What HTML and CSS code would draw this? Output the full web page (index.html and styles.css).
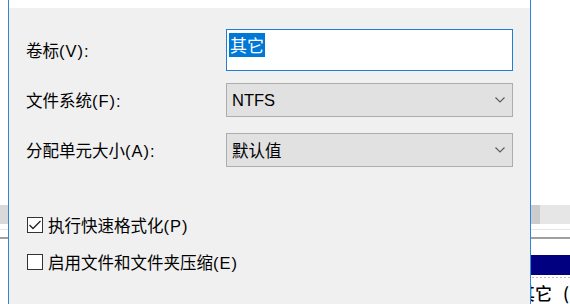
FILE: index.html
```html
<!DOCTYPE html>
<html>
<head>
<meta charset="utf-8">
<link rel="stylesheet" href="styles.css">
</head>
<body>
<div class="screen">
  <div class="desk">
    <div class="desk-spacer"></div>
    <div class="greybar"><div class="gb-main"></div><div class="gb-patch"></div><div class="gb-rest"></div></div>
    <div class="lightline"></div>
    <div class="darkline"></div>
    <div class="navyrow"></div>
    <div class="dotline"></div>
    <div class="drive-row"><span>其它</span><span>(E:)</span></div>
  </div>

  <div class="dialog">
    <div class="dlg-top"></div>
    <div class="dlg-body">
      <div class="row row-text">
        <div class="label">卷标<span class="acc">(V):</span></div>
        <div class="textbox"><span class="sel">其它</span></div>
      </div>
      <div class="row row-combo1">
        <div class="label">文件系统<span class="acc">(F):</span></div>
        <div class="combo"><span class="combo-val">NTFS</span>
          <svg class="chev" width="10" height="6" viewBox="0 0 10 6"><path d="M0.5 0.5 L5 5 L9.5 0.5" fill="none" stroke="#5a5a5a" stroke-width="1.1"/></svg>
        </div>
      </div>
      <div class="row row-combo2">
        <div class="label">分配单元大小<span class="acc">(A):</span></div>
        <div class="combo"><span class="combo-val">默认值</span>
          <svg class="chev" width="10" height="6" viewBox="0 0 10 6"><path d="M0.5 0.5 L5 5 L9.5 0.5" fill="none" stroke="#5a5a5a" stroke-width="1.1"/></svg>
        </div>
      </div>
      <div class="check check1">
        <span class="box"><svg width="14" height="14" viewBox="0 0 14 14"><path d="M1.5 7 L5 10.5 L12.5 3" fill="none" stroke="#222" stroke-width="1.3"/></svg></span>
        <span class="check-label">执行快速格式化<span class="acc">(P)</span></span>
      </div>
      <div class="check check2">
        <span class="box"></span>
        <span class="check-label">启用文件和文件夹压缩<span class="acc">(E)</span></span>
      </div>
    </div>
  </div>
</div>
</body>
</html>
```

FILE: styles.css
```css
html, body {
  margin: 0;
  padding: 0;
}
body {
  width: 570px;
  height: 304px;
  overflow: hidden;
  background: #ffffff;
  font-family: "Liberation Sans", "Noto Sans CJK SC", sans-serif;
  font-size: 16.5px;
  color: #000;
}
.screen {
  position: relative;
  width: 570px;
  height: 304px;
  overflow: hidden;
}
.desk {
  display: flex;
  flex-direction: column;
  width: 570px;
  height: 304px;
}
.desk-spacer { height: 205px; flex: none; }
.greybar {
  height: 19px;
  flex: none;
  display: flex;
}
.gb-main { width: 531px; background: #d9d9d9; }
.gb-patch { width: 9px; background: #cccccc; }
.gb-rest { flex: 1; background: #e6e6e6; }
.lightline {
  height: 1px;
  margin-top: 5px;
  background: #e6e6e6;
  flex: none;
}
.darkline {
  height: 2px;
  margin-top: 7px;
  background: #a0a0a0;
  flex: none;
}
.navyrow {
  height: 20px;
  margin-top: 16px;
  margin-left: 300px;
  background: #000080;
  flex: none;
}
.dotline {
  height: 1px;
  margin-top: 2px;
  margin-left: 300px;
  background: repeating-linear-gradient(90deg, #bdbdbd 0 2px, #ffffff 2px 4px);
  flex: none;
}
.drive-row {
  display: flex;
  gap: 11px;
  margin-top: 5px;
  margin-left: 518px;
  height: 20px;
  line-height: 20px;
  font-family: "Noto Sans CJK SC", sans-serif;
  font-size: 17px;
  font-weight: 500;
  white-space: nowrap;
}

.dialog {
  position: absolute;
  left: 8px;
  top: 0;
  width: 521px;
  height: 304px;
  border-left: 1px solid #2f86d6;
  border-right: 1px solid #2f86d6;
  display: flex;
  flex-direction: column;
}
.dlg-top {
  height: 8px;
  background: #ffffff;
  flex: none;
}
.dlg-body {
  flex: 1;
  background: #f0f0f0;
  padding: 21px 17px 0 17px;
  display: flex;
  flex-direction: column;
}
.row {
  display: flex;
  align-items: center;
  flex: none;
}
.label {
  width: 200px;
  flex: none;
  white-space: nowrap;
}
.acc {
  font-family: "Liberation Sans", sans-serif;
  letter-spacing: 1px;
}
.row-text { height: 42px; }
.row-combo1 { height: 34px; margin-top: 12px; }
.row-combo2 { height: 34px; margin-top: 16px; }

.textbox {
  box-sizing: border-box;
  width: 287px;
  height: 42px;
  align-self: stretch;
  border: 1px solid #1f7fd2;
  background: #ffffff;
  padding: 3px 2px;
}
.sel {
  display: inline-block;
  background: #0078d7;
  color: #ffffff;
  line-height: 24px;
  padding: 0 1px;
  font-family: "Noto Sans CJK SC", sans-serif;
  font-size: 17px;
}
.combo {
  box-sizing: border-box;
  width: 287px;
  height: 34px;
  border: 1px solid #adadad;
  background: #e1e1e1;
  display: flex;
  align-items: center;
  justify-content: space-between;
  padding: 0 7px 0 5px;
}
.combo-val {
  font-size: 16.5px;
}
.chev { display: block; }

.check {
  display: flex;
  align-items: center;
  height: 24px;
  flex: none;
}
.check1 { margin-top: 46px; }
.check2 { margin-top: 13px; }
.box {
  box-sizing: border-box;
  width: 16px;
  height: 16px;
  border: 1px solid #333333;
  background: #ffffff;
  display: flex;
  align-items: center;
  justify-content: center;
  flex: none;
  margin-left: 1px;
}
.box svg { display: block; }
.check-label {
  margin-left: 5px;
  white-space: nowrap;
}
```
